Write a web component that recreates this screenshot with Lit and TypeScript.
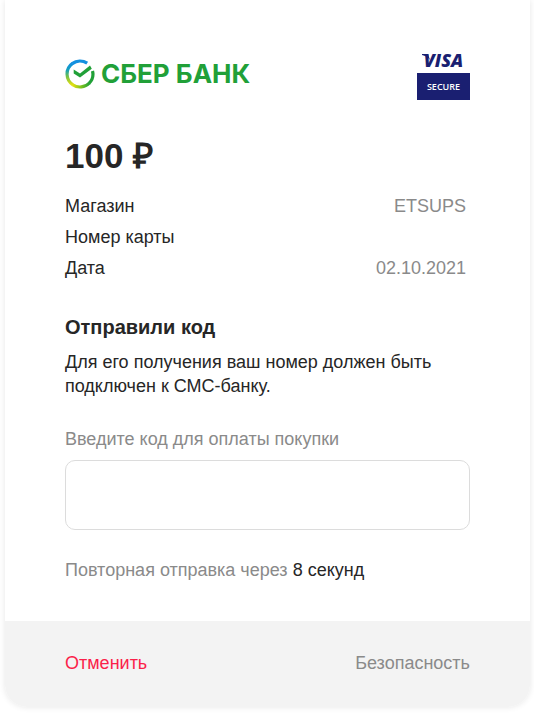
import { LitElement, html, css } from "lit";
import { customElement, property, state } from "lit/decorators.js";

@customElement("sber-logo")
class SberLogo extends LitElement {
  static styles = css`
    :host { display: flex; align-items: center; gap: 6px; }
    .mark { display: block; width: 30px; height: 30px; flex: none; }
    .name {
      font: 700 26px/30px Inter, "Open Sans", sans-serif;
      color: #21a038;
      white-space: nowrap;
    }
  `;

  render() {
    return html`
      <svg class="mark" viewBox="0 0 30 30" fill="none" aria-hidden="true">
        <defs>
          <linearGradient id="left" x1="0" y1="0" x2="0" y2="1">
            <stop offset="0" stop-color="#1390e0" />
            <stop offset="0.3" stop-color="#13a0bd" />
            <stop offset="0.6" stop-color="#6fc04a" />
            <stop offset="1" stop-color="#e6e010" />
          </linearGradient>
          <linearGradient id="base" x1="0" y1="0" x2="1" y2="0">
            <stop offset="0" stop-color="#e6e010" />
            <stop offset="0.5" stop-color="#7fc41c" />
            <stop offset="1" stop-color="#21a038" />
          </linearGradient>
        </defs>
        <path d="M7.5 4.4A13 13 0 0 0 8 25.9" stroke="url(#left)" stroke-width="3.2" />
        <path d="M7.2 4.6A13 13 0 0 1 22.2 4.2" stroke="#1390e0" stroke-width="3.2" />
        <path d="M7.6 25.7A13 13 0 0 0 24.4 24" stroke="url(#base)" stroke-width="3.2" />
        <path d="M27.5 12A13 13 0 0 1 24 24.4" stroke="#21a038" stroke-width="3.2" />
        <path d="M8.7 10.6V14.4L15 18.6L26.8 9.8L25 6.4L15 14.4Z" fill="#21a038" />
      </svg>
      <span class="name">СБЕР БАНК</span>
    `;
  }
}

@customElement("visa-secure")
class VisaSecure extends LitElement {
  static styles = css`
    :host { display: block; width: 53px; text-align: center; }
    .visa {
      position: relative; height: 26px; color: #1a1f71;
      font: italic 800 18px/26px "Open Sans", sans-serif;
    }
    .wing { position: absolute; left: 5px; top: 7px; width: 8px; height: 6px; }
    .secure {
      height: 27px; background: #1a1f71; color: #fff;
      font: 600 9px/27px "Open Sans", sans-serif;
    }
  `;

  render() {
    return html`
      <div class="visa">
        <svg class="wing" viewBox="0 0 8 6" aria-hidden="true">
          <path d="M0 0H6L8 6Q5 2 0 1Z" fill="#1a1f71" />
        </svg>VISA
      </div>
      <div class="secure">SECURE</div>
    `;
  }
}

@customElement("app-root")
class AppRoot extends LitElement {
  static styles = css`
    :host {
      display: block;
      padding: 0 4px 6px 5px;
      background: #fff;
      color: #262626;
      font: 18px/24px "Liberation Sans", Arial, sans-serif;
    }
    * { box-sizing: border-box; }
    .card {
      border-radius: 0 0 22px 22px;
      overflow: hidden;
      background: #fff;
      box-shadow: 0 0 6px rgba(0, 0, 0, 0.1);
    }
    .body { padding: 47px 60px 39px; }
    .brands { display: flex; justify-content: space-between; align-items: center; }
    .amount { margin: 36px 0 15px; font-size: 35px; line-height: 40px; font-weight: 700; }
    .details { margin: 0; padding-right: 4px; }
    .row { display: flex; justify-content: space-between; line-height: 31px; }
    .row dd { margin: 0; }
    .muted { color: #8a8a8a; }
    .title { margin: 31px 0 11px; font-size: 20px; line-height: 24px; font-weight: 700; }
    .hint { margin: 0 0 29px; }
    .label { display: block; margin-bottom: 9px; }
    .code {
      display: block; width: 100%; height: 70px; padding: 0 20px;
      border: 1px solid #dcdcdc; border-radius: 10px; background: #fff;
      font: inherit; font-size: 24px; color: inherit;
    }
    .resend { margin: 28px 0 0; }
    .time { color: #262626; }
    .footer {
      display: flex; justify-content: space-between;
      padding: 30px 60px 32px; background: #f3f3f3;
    }
    .cancel {
      padding: 0; border: 0; background: none; font: inherit;
      color: #fb1f4a; cursor: pointer;
    }
    .safety { text-decoration: none; }
  `;

  @property({ type: Number }) seconds = 8;
  @state() private details = [
    ["Магазин", "ETSUPS"],
    ["Номер карты", ""],
    ["Дата", "02.10.2021"],
  ];

  render() {
    return html`
      <main class="card">
        <div class="body">
          <header class="brands">
            <sber-logo></sber-logo>
            <visa-secure></visa-secure>
          </header>
          <h1 class="amount">100 ₽</h1>
          <dl class="details">
            ${this.details.map(
              ([name, value]) => html`
                <div class="row"><dt>${name}</dt><dd class="muted">${value}</dd></div>
              `
            )}
          </dl>
          <h2 class="title">Отправили код</h2>
          <p class="hint">Для его получения ваш номер должен быть подключен к СМС-банку.</p>
          <label class="label muted" for="code">Введите код для оплаты покупки</label>
          <input class="code" id="code" type="text" inputmode="numeric" autocomplete="one-time-code" />
          <p class="resend muted">
            Повторная отправка через <span class="time">${this.seconds} секунд</span>
          </p>
        </div>
        <footer class="footer">
          <button class="cancel" type="button">Отменить</button>
          <a class="safety muted" href="#safety">Безопасность</a>
        </footer>
      </main>
    `;
  }
}
